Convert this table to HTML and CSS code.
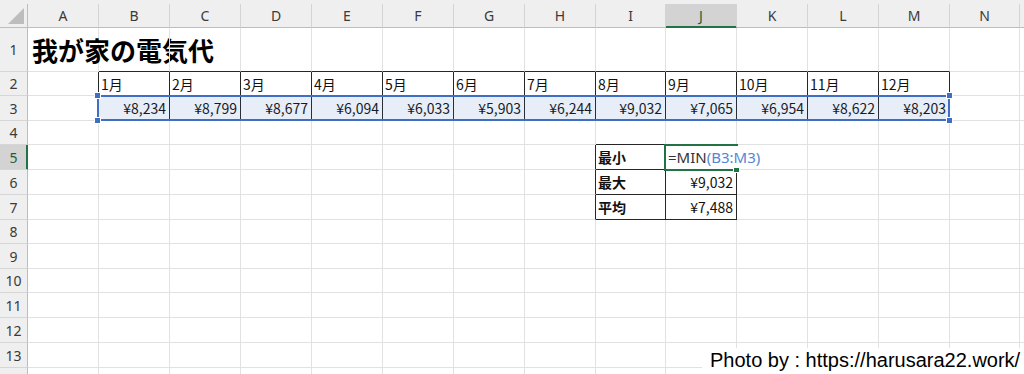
FILE: index.html
```html
<!DOCTYPE html>
<html lang="ja">
<head>
<meta charset="utf-8">
<title>我が家の電気代</title>
<link rel="stylesheet" href="styles.css">
</head>
<body>
<div class="app">
  <div class="topband"></div>
  <div class="sheet">
    <!-- header row -->
    <div class="corner"><svg width="27" height="23" viewBox="0 0 27 23"><polygon points="8,20 24,4 24,20" fill="#bdbdbd"/></svg></div>
    <div class="ch">A</div><div class="ch">B</div><div class="ch">C</div><div class="ch">D</div><div class="ch">E</div><div class="ch">F</div><div class="ch">G</div><div class="ch">H</div><div class="ch">I</div><div class="ch hl">J</div><div class="ch">K</div><div class="ch">L</div><div class="ch">M</div><div class="ch">N</div><div class="ch"></div>

    <!-- row 1 -->
    <div class="rh">1</div>
    <div class="c title">我が家の電気代</div>
    <div class="c bb"></div><div class="c bb"></div><div class="c bb"></div><div class="c bb"></div><div class="c bb"></div><div class="c bb"></div><div class="c bb"></div><div class="c bb"></div><div class="c bb"></div><div class="c bb"></div><div class="c bb"></div><div class="c bb"></div>
    <div class="c"></div><div class="c"></div>

    <!-- row 2 -->
    <div class="rh">2</div>
    <div class="c br"></div>
    <div class="c br bb">1月</div><div class="c br bb">2月</div><div class="c br bb">3月</div><div class="c br bb">4月</div><div class="c br bb">5月</div><div class="c br bb">6月</div><div class="c br bb">7月</div><div class="c br bb">8月</div><div class="c br bb">9月</div><div class="c br bb">10月</div><div class="c br bb">11月</div><div class="c br bb">12月</div>
    <div class="c"></div><div class="c"></div>

    <!-- row 3 -->
    <div class="rh">3</div>
    <div class="c br"></div>
    <div class="c br bb num host">¥8,234
      <div class="range"><span class="h tl"></span><span class="h bl"></span><span class="h tr"></span><span class="h brh"></span></div>
    </div>
    <div class="c br bb num">¥8,799</div><div class="c br bb num">¥8,677</div><div class="c br bb num">¥6,094</div><div class="c br bb num">¥6,033</div><div class="c br bb num">¥5,903</div><div class="c br bb num">¥6,244</div><div class="c br bb num">¥9,032</div><div class="c br bb num">¥7,065</div><div class="c br bb num">¥6,954</div><div class="c br bb num">¥8,622</div><div class="c br bb num">¥8,203</div>
    <div class="c"></div><div class="c"></div>

    <!-- row 4 -->
    <div class="rh">4</div>
    <div class="c"></div><div class="c"></div><div class="c"></div><div class="c"></div><div class="c"></div><div class="c"></div><div class="c"></div><div class="c"></div>
    <div class="c bb"></div><div class="c bb"></div>
    <div class="c"></div><div class="c"></div><div class="c"></div><div class="c"></div><div class="c"></div>

    <!-- row 5 -->
    <div class="rh hl">5</div>
    <div class="c"></div><div class="c"></div><div class="c"></div><div class="c"></div><div class="c"></div><div class="c"></div><div class="c"></div>
    <div class="c br"></div>
    <div class="c br bb lbl">最小</div>
    <div class="c br bb host">
      <div class="active"><span class="fill"></span></div>
      <div class="edit">=MIN<span class="ref">(B3:M3)</span></div>
    </div>
    <div class="c"></div><div class="c"></div><div class="c"></div><div class="c"></div><div class="c"></div>

    <!-- row 6 -->
    <div class="rh">6</div>
    <div class="c"></div><div class="c"></div><div class="c"></div><div class="c"></div><div class="c"></div><div class="c"></div><div class="c"></div>
    <div class="c br"></div>
    <div class="c br bb lbl">最大</div>
    <div class="c br bb num">¥9,032</div>
    <div class="c"></div><div class="c"></div><div class="c"></div><div class="c"></div><div class="c"></div>

    <!-- row 7 -->
    <div class="rh">7</div>
    <div class="c"></div><div class="c"></div><div class="c"></div><div class="c"></div><div class="c"></div><div class="c"></div><div class="c"></div>
    <div class="c br"></div>
    <div class="c br bb lbl">平均</div>
    <div class="c br bb num">¥7,488</div>
    <div class="c"></div><div class="c"></div><div class="c"></div><div class="c"></div><div class="c"></div>

    <!-- rows 8-14 -->
    <div class="rh">8</div>
    <div class="c"></div><div class="c"></div><div class="c"></div><div class="c"></div><div class="c"></div><div class="c"></div><div class="c"></div><div class="c"></div><div class="c"></div><div class="c"></div><div class="c"></div><div class="c"></div><div class="c"></div><div class="c"></div><div class="c"></div>
    <div class="rh">9</div>
    <div class="c"></div><div class="c"></div><div class="c"></div><div class="c"></div><div class="c"></div><div class="c"></div><div class="c"></div><div class="c"></div><div class="c"></div><div class="c"></div><div class="c"></div><div class="c"></div><div class="c"></div><div class="c"></div><div class="c"></div>
    <div class="rh">10</div>
    <div class="c"></div><div class="c"></div><div class="c"></div><div class="c"></div><div class="c"></div><div class="c"></div><div class="c"></div><div class="c"></div><div class="c"></div><div class="c"></div><div class="c"></div><div class="c"></div><div class="c"></div><div class="c"></div><div class="c"></div>
    <div class="rh">11</div>
    <div class="c"></div><div class="c"></div><div class="c"></div><div class="c"></div><div class="c"></div><div class="c"></div><div class="c"></div><div class="c"></div><div class="c"></div><div class="c"></div><div class="c"></div><div class="c"></div><div class="c"></div><div class="c"></div><div class="c"></div>
    <div class="rh">12</div>
    <div class="c"></div><div class="c"></div><div class="c"></div><div class="c"></div><div class="c"></div><div class="c"></div><div class="c"></div><div class="c"></div><div class="c"></div><div class="c"></div><div class="c"></div><div class="c"></div><div class="c"></div><div class="c"></div><div class="c"></div>
    <div class="rh">13</div>
    <div class="c"></div><div class="c"></div><div class="c"></div><div class="c"></div><div class="c"></div><div class="c"></div><div class="c"></div><div class="c"></div><div class="c"></div><div class="c"></div><div class="c"></div><div class="c"></div><div class="c"></div><div class="c"></div><div class="c"></div>
    <div class="rh">14</div>
    <div class="c"></div><div class="c"></div><div class="c"></div><div class="c"></div><div class="c"></div><div class="c"></div><div class="c"></div><div class="c"></div><div class="c"></div><div class="c"></div><div class="c"></div><div class="c"></div><div class="c"></div><div class="c"></div><div class="c"></div>
  </div>
  <div class="credit">Photo by : https://harusara22.work/</div>
</div>
</body>
</html>
```

FILE: styles.css
```css
* { box-sizing: border-box; }

html, body {
  margin: 0;
  padding: 0;
  background: #ffffff;
}

.app {
  position: relative;
  width: 1024px;
  height: 374px;
  overflow: hidden;
  background: #ffffff;
}

.topband {
  height: 4px;
  background: #efefef;
}

.sheet {
  display: grid;
  grid-template-columns: 28px 71px 71px 71px 71px 71px 71px 71px 71px 70px 71px 71px 71px 71px 70px 1fr;
  grid-template-rows: 24px 44px 24px 25px 24px 25px 25px 25px 24px 25px 24px 25px 25px 25px 25px;
  font-family: "Noto Sans CJK JP", "Noto Sans", sans-serif;
  font-size: 14px;
  color: #111;
}

.corner {
  background: #efefef;
  border-right: 1px solid #bdbdbd;
  border-bottom: 1px solid #bdbdbd;
  line-height: 0;
}

.ch {
  background: #efefef;
  border-right: 1px solid #d4d4d4;
  border-bottom: 1px solid #bdbdbd;
  display: flex;
  align-items: center;
  justify-content: center;
  font-family: "Noto Sans", sans-serif;
  font-size: 14px;
  color: #3a3a3a;
}

.ch.hl {
  background: #d3d3d3;
  color: #1f5e38;
  border-bottom-color: #217346;
  box-shadow: inset 0 -1px 0 #217346;
}

.rh {
  background: #efefef;
  border-right: 1px solid #bdbdbd;
  border-bottom: 1px solid #d6d6d6;
  display: flex;
  align-items: center;
  justify-content: center;
  font-family: "Noto Sans", sans-serif;
  font-size: 14px;
  color: #3a3a3a;
}

.rh.hl {
  background: #d3d3d3;
  color: #1f5e38;
  border-right-color: #217346;
  box-shadow: inset -1px 0 0 #217346;
}

.c {
  border-right: 1px solid #e1e1e1;
  border-bottom: 1px solid #e1e1e1;
  display: flex;
  align-items: center;
  padding: 0 3px 0 2px;
  white-space: nowrap;
  min-width: 0;
}

.br { border-right-color: #262626; }
.bb { border-bottom-color: #262626; }

.num { justify-content: flex-end; }

.title {
  font-size: 26px;
  font-weight: 700;
  color: #000;
  padding-left: 4px;
}

.lbl { font-weight: 700; }

.host { position: relative; }

.range {
  position: absolute;
  left: -2px;
  top: -1px;
  width: 853px;
  height: 26px;
  border: 2px solid #3f6fc5;
  background: rgba(68, 114, 196, 0.12);
  z-index: 2;
}

.h {
  position: absolute;
  width: 7px;
  height: 7px;
  background: #3f6fc5;
  border: 1px solid #ffffff;
}
.h.tl { left: -5px; top: -5px; }
.h.bl { left: -5px; bottom: -5px; }
.h.tr { right: -5px; top: -5px; }
.h.brh { right: -5px; bottom: -5px; }

.active {
  position: absolute;
  left: -2px;
  top: -1px;
  width: 74px;
  height: 27px;
  border: 2px solid #217346;
  z-index: 3;
}

.fill {
  position: absolute;
  right: -4px;
  bottom: -4px;
  width: 7px;
  height: 7px;
  background: #217346;
  border: 1px solid #ffffff;
}

.edit {
  position: absolute;
  left: 0;
  top: 1px;
  height: 22px;
  display: flex;
  align-items: center;
  padding: 0 3px 0 2px;
  background: #ffffff;
  font-family: "Noto Sans", sans-serif;
  font-size: 15px;
  color: #333;
  white-space: nowrap;
  z-index: 4;
}
.edit .ref { color: #5585d6; }

.credit {
  position: absolute;
  left: 702px;
  top: 348px;
  right: 0;
  bottom: 0;
  background: #ffffff;
  padding: 1px 0 0 8px;
  font-family: "Liberation Sans", Arial, sans-serif;
  font-size: 20px;
  line-height: 23px;
  color: #000;
  white-space: nowrap;
}
```
